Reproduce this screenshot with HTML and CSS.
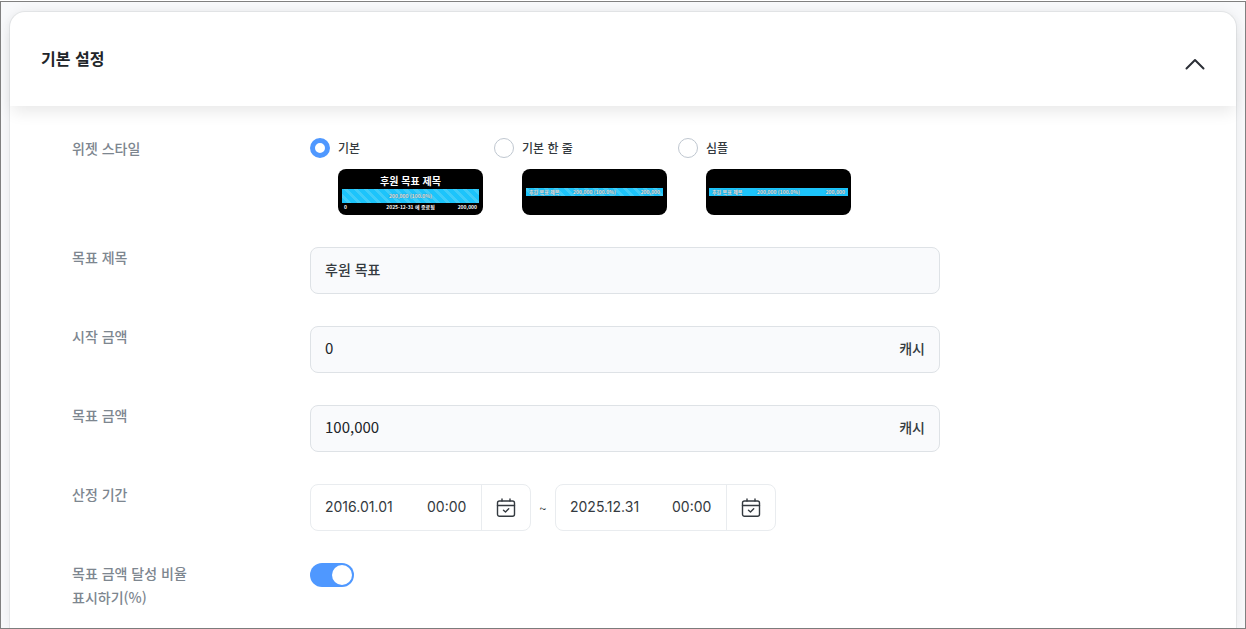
FILE: index.html
```html
<!DOCTYPE html>
<html lang="ko">
<head>
    <meta charset="UTF-8">
    <meta name="viewport" content="width=device-width, initial-scale=1.0">
    <title>기본 설정</title>
    <link rel="stylesheet" href="styles.css">
</head>
<body>
    <main class="page">
        <section class="card">
            <header class="card-header">
                <h2>기본 설정</h2>
                <button type="button" class="toggle-btn" id="toggle-btn" aria-label="접기" aria-expanded="true">
                    <svg width="20" height="12" viewBox="0 0 20 12" fill="none" stroke="#2b2f36" stroke-width="2" stroke-linecap="round" stroke-linejoin="round">
                        <path d="M1.5 10.5 L10 2 L18.5 10.5"/>
                    </svg>
                </button>
            </header>
            <form class="settings" id="settings">
                <div class="row" role="radiogroup" aria-labelledby="style-label">
                    <span class="label" id="style-label">위젯 스타일</span>
                    <div class="style-list">
                        <label class="style-item">
                            <input type="radio" name="widgetStyle" value="basic" checked>
                            <span class="style-name">기본</span>
                            <span class="preview">
                                <span class="preview-title">후원 목표 제목</span>
                                <span class="bar bar-large striped">200,000 (100.0%)</span>
                                <span class="preview-info">
                                    <span>0</span>
                                    <span>2025-12-31 에 종료됨</span>
                                    <span>200,000</span>
                                </span>
                            </span>
                        </label>
                        <label class="style-item">
                            <input type="radio" name="widgetStyle" value="line">
                            <span class="style-name">기본 한 줄</span>
                            <span class="preview preview-line">
                                <span class="bar striped">
                                    <span>후원 목표 제목</span>
                                    <span>200,000 (100.0%)</span>
                                    <span>200,000</span>
                                </span>
                            </span>
                        </label>
                        <label class="style-item">
                            <input type="radio" name="widgetStyle" value="simple">
                            <span class="style-name">심플</span>
                            <span class="preview preview-line preview-simple">
                                <span class="bar">
                                    <span>후원 목표 제목</span>
                                    <span>200,000 (100.0%)</span>
                                    <span>200,000</span>
                                </span>
                            </span>
                        </label>
                    </div>
                </div>
                <div class="row">
                    <label class="label" for="goal-title">목표 제목</label>
                    <div class="field">
                        <input type="text" id="goal-title" name="goalTitle" value="후원 목표">
                    </div>
                </div>
                <div class="row">
                    <label class="label" for="start-amount">시작 금액</label>
                    <div class="field">
                        <input type="text" class="amount" id="start-amount" name="startAmount" value="0">
                        <span class="unit">캐시</span>
                    </div>
                </div>
                <div class="row">
                    <label class="label" for="goal-amount">목표 금액</label>
                    <div class="field">
                        <input type="text" class="amount" id="goal-amount" name="goalAmount" value="100,000">
                        <span class="unit">캐시</span>
                    </div>
                </div>
                <div class="row">
                    <label class="label" for="start-date">산정 기간</label>
                    <div class="period">
                        <div class="date-box">
                            <input type="text" class="date" id="start-date" value="2016.01.01">
                            <input type="text" class="time" value="00:00" aria-label="시작 시간">
                            <button type="button" class="calendar-btn" aria-label="시작일 선택">
                                <svg width="20" height="20" viewBox="0 0 20 20" fill="none" stroke="#343a40" stroke-width="1.4" stroke-linecap="round" stroke-linejoin="round">
                                    <rect x="1.5" y="3" width="17" height="15.3" rx="2"/>
                                    <path d="M1.5 7.5H18.5M6 1V3M14 1V3M7.5 12.2L9.5 14L12.7 10.8"/>
                                </svg>
                            </button>
                        </div>
                        <span class="tilde">~</span>
                        <div class="date-box">
                            <input type="text" class="date" value="2025.12.31" aria-label="종료일">
                            <input type="text" class="time" value="00:00" aria-label="종료 시간">
                            <button type="button" class="calendar-btn" aria-label="종료일 선택">
                                <svg width="20" height="20" viewBox="0 0 20 20" fill="none" stroke="#343a40" stroke-width="1.4" stroke-linecap="round" stroke-linejoin="round">
                                    <rect x="1.5" y="3" width="17" height="15.3" rx="2"/>
                                    <path d="M1.5 7.5H18.5M6 1V3M14 1V3M7.5 12.2L9.5 14L12.7 10.8"/>
                                </svg>
                            </button>
                        </div>
                    </div>
                </div>
                <div class="row">
                    <label class="label" for="show-percent">목표 금액 달성 비율<br>표시하기(%)</label>
                    <input type="checkbox" class="switch" id="show-percent" name="showPercent" checked>
                </div>
            </form>
        </section>
    </main>
    <script>
        // Open / close the settings form
        const toggleBtn = document.getElementById('toggle-btn');
        toggleBtn.addEventListener('click', () => {
            const form = document.getElementById('settings');
            form.hidden = !form.hidden;
            toggleBtn.setAttribute('aria-expanded', String(!form.hidden));
        });
    </script>
</body>
</html>
```
FILE: styles.css
```css
/* General Styles */
* {
    box-sizing: border-box;
}

body {
    margin: 0;
    padding-top: 1px;
    font-family: 'Noto Sans CJK KR', sans-serif;
    font-size: 14px;
    font-weight: 500;
    color: #343a40;
    background-color: #ffffff;
}

input, button {
    font: inherit;
    color: inherit;
    margin: 0;
}

button {
    border: none;
    background: none;
    padding: 0;
    cursor: pointer;
}

svg {
    display: block;
}

.page {
    display: flex;
    min-height: calc(100vh - 1px);
    padding: 9px 8px 0;
    border: 1px solid #808080;
    background-color: #f8f9fb;
}

/* Card */
.card {
    flex: 1;
    background-color: #ffffff;
    border: 1px solid #e3e5e7;
    border-bottom: none;
    border-radius: 16px 16px 0 0;
    box-shadow: 0 0 12px rgba(0, 0, 0, 0.06);
}

.card-header {
    display: flex;
    justify-content: space-between;
    align-items: center;
    height: 94px;
    padding: 0 30px 2px 31px;
    border-radius: 16px 16px 0 0;
    box-shadow: 0 8px 16px -2px rgba(0, 0, 0, 0.09);
}

.card-header h2 {
    margin: 0;
    font-size: 16px;
    line-height: 24px;
    font-weight: 700;
    color: #212529;
}

.toggle-btn {
    padding: 12px 1px 0;
}

/* Form Styles */
.settings {
    display: flex;
    flex-direction: column;
    gap: 32px;
    padding: 32px 62px 8px;
}

.settings[hidden] {
    display: none;
}

.row {
    display: grid;
    grid-template-columns: 238px minmax(0, 630px);
    align-items: start;
}

.label {
    margin-top: -2px;
    line-height: 24px;
    color: #7d868f;
}

/* Widget style */
.style-list {
    display: grid;
    grid-template-columns: repeat(3, 184px);
}

.style-item {
    display: grid;
    grid-template-columns: 20px 145px;
    column-gap: 8px;
    row-gap: 11px;
    align-items: center;
    cursor: pointer;
}

.style-item input {
    appearance: none;
    width: 20px;
    height: 20px;
    border: 1px solid #bfc7d0;
    border-radius: 50%;
    background-color: #ffffff;
}

.style-item input:checked {
    border: 5px solid #4f98ff;
}

.style-name {
    font-size: 12px;
    line-height: 20px;
}

.preview {
    grid-column: 2;
    display: flex;
    flex-direction: column;
    height: 46px;
    padding: 4px;
    border-radius: 8px;
    background-color: #000000;
    color: #ffffff;
    font-size: 5px;
    line-height: 8px;
    font-weight: 700;
    text-align: center;
    white-space: nowrap;
}

.preview-title {
    font-size: 10px;
    line-height: 16px;
}

.bar {
    display: grid;
    grid-template-columns: 1fr 2fr 1fr;
    height: 8px;
    padding: 0 3px;
    background-color: #1cc4fb;
    color: #e6eef1;
    text-shadow: 0 0 1px #2b4a58;
}

.striped {
    background-image: repeating-linear-gradient(45deg, #1cc4fb 0 4px, #40cdf8 4px 7px);
}

.bar-large {
    display: block;
    height: 14px;
    line-height: 14px;
}

.preview-info {
    display: grid;
    grid-template-columns: 1fr 2fr 1fr;
    padding: 0 2px;
}

.preview-info span:first-child,
.bar span:first-child {
    text-align: left;
}

.preview-info span:last-child,
.bar span:last-child {
    text-align: right;
}

.preview-line {
    justify-content: center;
}

.preview-simple {
    padding: 4px 3px;
}

/* Text fields */
.field {
    display: flex;
    align-items: center;
    height: 47px;
    padding: 0 14px 3px;
    border: 1px solid #dee2e6;
    border-radius: 8px;
    background-color: #f9fafc;
}

.field input {
    flex: 1;
    min-width: 0;
    padding: 0;
    border: none;
    outline: none;
    background: none;
    line-height: 24px;
}

.field .amount {
    font-size: 15px;
    font-weight: 400;
    color: #212529;
}

/* Period */
.period {
    display: flex;
    align-items: center;
}

.date-box {
    display: flex;
    align-items: center;
    height: 47px;
    border: 1px solid #e9ecef;
    border-radius: 8px;
    font-family: Inter, 'Noto Sans CJK KR', sans-serif;
    font-weight: 400;
}

.date-box input {
    margin-left: 14px;
    padding: 0 0 2px;
    border: none;
    outline: none;
    background: none;
}

.date-box .date {
    width: 88px;
}

.date-box .time {
    width: 54px;
}

.calendar-btn {
    display: flex;
    justify-content: center;
    align-items: center;
    align-self: stretch;
    width: 49px;
    border-left: 1px solid #e9ecef;
}

.tilde {
    width: 24px;
    text-align: center;
    font-size: 12px;
}

/* Switch */
.switch {
    appearance: none;
    display: flex;
    align-items: center;
    width: 44px;
    height: 24px;
    padding: 0 2px;
    border-radius: 12px;
    background-color: #ced4da;
    cursor: pointer;
}

.switch::before {
    content: "";
    width: 20px;
    height: 20px;
    border-radius: 50%;
    background-color: #ffffff;
}

.switch:checked {
    justify-content: flex-end;
    background-color: #4f98ff;
}
```
